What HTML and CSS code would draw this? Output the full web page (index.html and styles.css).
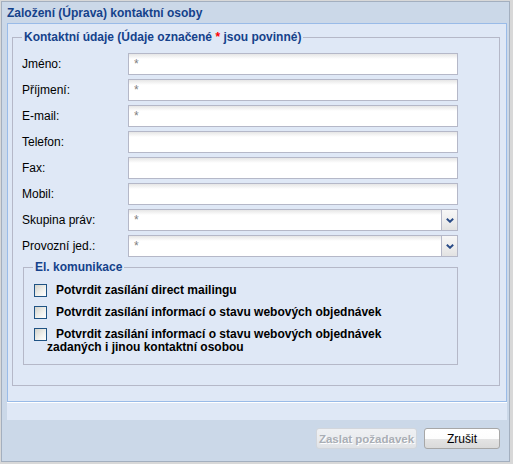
FILE: index.html
```html
<!DOCTYPE html>
<html lang="cs">
<head>
<meta charset="utf-8">
<title>Založení kontaktní osoby</title>
<link rel="stylesheet" href="styles.css">
</head>
<body>
<div class="window">
  <div class="win-header">Založení (Úprava) kontaktní osoby</div>
  <div class="win-body">
    <fieldset class="fs fs-main">
      <legend>Kontaktní údaje (Údaje označené <span class="req">*</span> jsou povinné)</legend>
      <div class="row"><label class="lbl">Jméno:</label><div class="field"><input type="text" placeholder="*"></div></div>
      <div class="row"><label class="lbl">Příjmení:</label><div class="field"><input type="text" placeholder="*"></div></div>
      <div class="row"><label class="lbl">E-mail:</label><div class="field"><input type="text" placeholder="*"></div></div>
      <div class="row"><label class="lbl">Telefon:</label><div class="field"><input type="text"></div></div>
      <div class="row"><label class="lbl">Fax:</label><div class="field"><input type="text"></div></div>
      <div class="row"><label class="lbl">Mobil:</label><div class="field"><input type="text"></div></div>
      <div class="row"><label class="lbl">Skupina práv:</label><div class="field combo"><input type="text" placeholder="*"><span class="trigger"><svg width="8" height="5" viewBox="0 0 8 5"><path d="M0.8 0.8 L4 3.8 L7.2 0.8" fill="none" stroke="#284a86" stroke-width="1.9"/></svg></span></div></div>
      <div class="row"><label class="lbl">Provozní jed.:</label><div class="field combo"><input type="text" placeholder="*"><span class="trigger"><svg width="8" height="5" viewBox="0 0 8 5"><path d="M0.8 0.8 L4 3.8 L7.2 0.8" fill="none" stroke="#284a86" stroke-width="1.9"/></svg></span></div></div>
      <fieldset class="fs fs-sub">
        <legend>El. komunikace</legend>
        <div class="check"><span class="cb"></span>Potvrdit zasílání direct mailingu</div>
        <div class="check"><span class="cb"></span>Potvrdit zasílání informací o stavu webových objednávek</div>
        <div class="check"><span class="cb"></span>Potvrdit zasílání informací o stavu webových objednávek zadaných i jinou kontaktní osobou</div>
      </fieldset>
    </fieldset>
  </div>
  <div class="win-strip"></div>
  <div class="win-footer">
    <button class="btn btn-disabled" disabled>Zaslat požadavek</button>
    <button class="btn btn-cancel">Zrušit</button>
  </div>
</div>
</body>
</html>
```
FILE: styles.css
```css
html, body {
  margin: 0;
  padding: 0;
}
body {
  background: #d8d8d8;
  font-family: "Liberation Sans", Arial, sans-serif;
  width: 513px;
  height: 464px;
  overflow: hidden;
}
.window {
  box-sizing: border-box;
  margin: 1px 0 0 1px;
  width: 509px;
  height: 461px;
  border: 1px solid #a3afbf;
  background: #cbd8e8;
  padding: 0 2px 0 5px;
}
.win-header {
  height: 21px;
  box-sizing: border-box;
  padding-top: 2px;
  font: bold 12px/18px "Liberation Sans", Arial, sans-serif;
  color: #15428b;
  white-space: nowrap;
}
.win-body {
  box-sizing: border-box;
  width: 500px;
  height: 379px;
  border: 1px solid #99bbe8;
  background: #dfe8f6;
  padding: 0 4px;
  overflow: hidden;
}
.fs {
  border: 1px solid #b5b8c8;
  margin: 0;
  min-width: 0;
}
.fs legend {
  padding: 0 2px;
  margin: 0;
  font: bold 12px/13px "Liberation Sans", Arial, sans-serif;
  color: #15428b;
  white-space: nowrap;
}
.req {
  color: #ff0000;
}
.fs-main {
  margin: 7px 0 0 0;
  width: 488px;
  box-sizing: border-box;
  padding: 9px 41px 20px 9px;
}
.row {
  display: flex;
  height: 22px;
  margin-bottom: 4px;
}
.lbl {
  width: 106px;
  flex: none;
  font-size: 12px;
  line-height: 22px;
  color: #000;
}
.field {
  box-sizing: border-box;
  width: 330px;
  height: 22px;
  border: 1px solid #b5b8c8;
  background: linear-gradient(to bottom, #e6e6e6 0, #ffffff 5px);
  display: flex;
}
.field input {
  flex: 1;
  min-width: 0;
  border: 0;
  margin: 0;
  padding: 0 0 0 5px;
  background: transparent;
  font: 12px "Liberation Sans", Arial, sans-serif;
  color: #000;
  outline: none;
}
.field input::placeholder {
  color: #808080;
}
.trigger {
  flex: none;
  box-sizing: border-box;
  width: 16px;
  border-left: 1px solid #b5b8c8;
  background: linear-gradient(to bottom, #f7f7f7 0, #ececec 60%, #e2e2e2 100%);
  display: flex;
  align-items: center;
  justify-content: center;
}
.trigger svg {
  display: block;
  margin-left: 1px;
}
.fs-sub {
  margin: 0 0 0 1px;
  padding: 10px 4px 10px 9px;
}
.check {
  max-width: 370px;
  padding-left: 14px;
  font: bold 12px/13px "Liberation Sans", Arial, sans-serif;
  color: #000;
  margin-bottom: 9px;
}
.check:last-child {
  margin-bottom: 0;
}
.cb {
  display: inline-block;
  box-sizing: border-box;
  width: 13px;
  height: 13px;
  vertical-align: top;
  margin: 0 9px 0 -13px;
  border: 1px solid #1f5384;
  background: linear-gradient(135deg, #d3d3cc 0, #f2f2ee 60%, #ffffff 100%);
}
.win-strip {
  box-sizing: border-box;
  width: 500px;
  height: 18px;
  border-top: 1px solid #ffffff;
  background: #dfe8f6;
}
.win-footer {
  display: flex;
  justify-content: flex-end;
  gap: 7px;
  padding: 8px 7px 0 0;
}
.btn {
  box-sizing: border-box;
  height: 21px;
  margin: 0;
  padding: 0;
  border-radius: 3px;
  cursor: default;
}
.btn-disabled {
  width: 101px;
  border: 1px solid #d2d6dc;
  background: linear-gradient(to bottom, #eef0f3 0, #e9ebee 55%, #dfe2e6 100%);
  font: bold 11.5px "Liberation Sans", Arial, sans-serif;
  color: #a9aeb5;
  text-shadow: 1px 1px 0 #ffffff;
}
.btn-cancel {
  width: 76px;
  border: 1px solid #a7a7a7;
  background: linear-gradient(to bottom, #ffffff 0, #fdfdfd 50%, #e4e4e4 52%, #dadada 100%);
  font: 12px "Liberation Sans", Arial, sans-serif;
  color: #000;
}
```
